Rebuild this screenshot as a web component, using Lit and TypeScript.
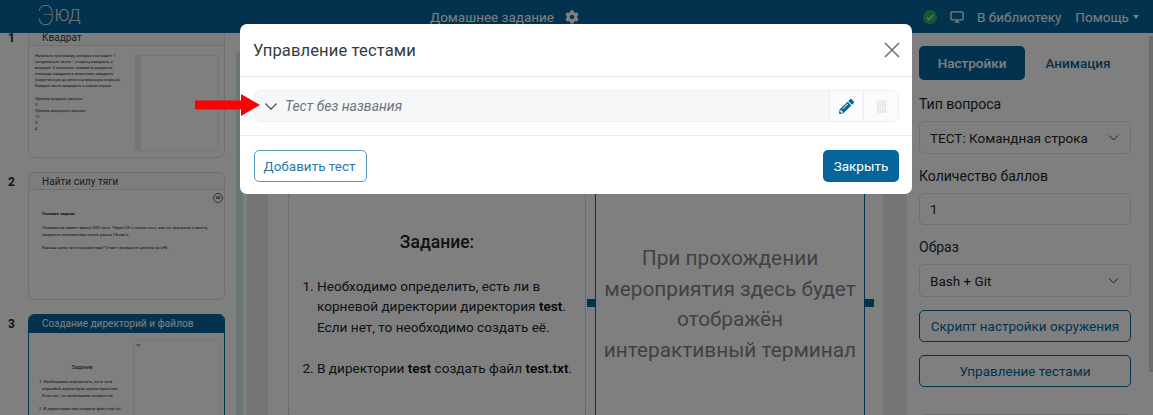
import { LitElement, html, css } from "lit";
import { customElement } from "lit/decorators.js";

const COG = "M487.4 315.7l-42.6-24.6c4.3-23.2 4.3-47 0-70.2l42.6-24.6c4.9-2.8 7.1-8.6 5.5-14-11.1-35.6-30-67.8-54.7-94.6-3.8-4.1-10-5.1-14.8-2.3L380.8 110c-17.9-15.4-38.5-27.3-60.8-35.1V25.8c0-5.6-3.9-10.5-9.4-11.7-36.7-8.2-74.3-7.8-109.2 0-5.5 1.2-9.4 6.1-9.4 11.7V75c-22.2 7.9-42.8 19.8-60.8 35.1L88.7 85.5c-4.9-2.8-11-1.9-14.8 2.3-24.7 26.7-43.6 58.9-54.7 94.6-1.7 5.4.6 11.2 5.5 14L67.3 221c-4.3 23.2-4.3 47 0 70.2l-42.6 24.6c-4.9 2.8-7.1 8.6-5.5 14 11.1 35.6 30 67.8 54.7 94.6 3.8 4.1 10 5.1 14.8 2.3l42.6-24.6c17.9 15.4 38.5 27.3 60.8 35.1v49.2c0 5.6 3.9 10.5 9.4 11.7 36.7 8.2 74.3 7.8 109.2 0 5.5-1.2 9.4-6.1 9.4-11.7v-49.2c22.2-7.9 42.8-19.8 60.8-35.1l42.6 24.6c4.9 2.8 11 1.9 14.8-2.3 24.7-26.7 43.6-58.9 54.7-94.6 1.5-5.5-.7-11.3-5.6-14.1zM256 336c-44.1 0-80-35.9-80-80s35.9-80 80-80 80 35.9 80 80-35.9 80-80 80z";
const PENCIL = "M497.9 142.1l-46.1 46.1c-4.7 4.7-12.3 4.7-17 0l-111-111c-4.7-4.7-4.7-12.3 0-17l46.1-46.1c18.7-18.7 49.1-18.7 67.9 0l60.1 60.1c18.8 18.7 18.8 49.1 0 67.9zM284.2 99.8L21.6 362.4.4 483.9c-2.9 16.4 11.4 30.6 27.8 27.8l121.5-21.3 262.6-262.6c4.7-4.7 4.7-12.3 0-17l-111-111c-4.8-4.7-12.4-4.7-17.1 0zM124.1 339.9c-5.5-5.5-5.5-14.3 0-19.8l154-154c5.5-5.5 14.3-5.5 19.8 0s5.5 14.3 0 19.8l-154 154c-5.5 5.5-14.3 5.5-19.8 0zM88 424h48v36.3l-64.5 11.3-31.1-31.1L51.7 376H88v48z";
const TRASH = "M32 464a48 48 0 0 0 48 48h288a48 48 0 0 0 48-48V128H32zm272-256a16 16 0 0 1 32 0v224a16 16 0 0 1-32 0zm-96 0a16 16 0 0 1 32 0v224a16 16 0 0 1-32 0zm-96 0a16 16 0 0 1 32 0v224a16 16 0 0 1-32 0zM432 32H312l-9-19a24 24 0 0 0-22-13H167a24 24 0 0 0-22 13l-9 19H16A16 16 0 0 0 0 48v32a16 16 0 0 0 16 16h416a16 16 0 0 0 16-16V48a16 16 0 0 0-16-16z";

const chevron = () => html`<svg class="chev" viewBox="0 0 16 16" fill="none" stroke="currentColor" stroke-width="1.4" stroke-linecap="round" stroke-linejoin="round"><path d="M2 5.5l6 6 6-6"/></svg>`;

@customElement("app-root")
export class AppRoot extends LitElement {
  static styles = css`
    :host { display: block; width: 1153px; height: 415px; font-family: Roboto, "Liberation Sans", sans-serif; color: #212529; }
    * { box-sizing: border-box; }
    .page { position: relative; width: 1153px; height: 415px; overflow: hidden; background: #fff; display: flex; flex-direction: column; }

    .top { flex: none; height: 33px; background: #06659c; color: #fff; display: flex; align-items: center; font-size: 13.5px; white-space: nowrap; z-index: 1; }
    .top > * { flex: none; }
    .logo { margin-left: 37px; width: 393px; display: flex; align-items: center; font-weight: 300; color: #f4f4f4; line-height: 1; }
    .logo .e { font-size: 27px; font-weight: 100; }
    .logo .r { font-size: 16.5px; letter-spacing: -.7px; }
    .cog { width: 14px; height: 14px; margin-left: 11px; fill: #fff; }
    .ok { width: 14px; height: 14px; margin-left: 344px; }
    .mon { width: 14px; height: 14px; margin-left: 13px; fill: none; stroke: #fff; stroke-width: 1.4; }
    .lib { margin-left: 13px; }
    .help { margin-left: 14px; }
    .caret { margin-left: 4px; width: 0; height: 0; border: 3.5px solid transparent; border-top: 4px solid #fff; border-bottom: 0; }

    .body { flex: 1; display: flex; min-height: 0; }

    .side { flex: none; width: 236px; overflow: hidden; display: flex; flex-direction: column; gap: 14px; margin-top: -5px; }
    .row { flex: none; display: flex; }
    .num { flex: none; width: 28px; padding: 3px 0 0 8px; font-size: 12px; font-weight: 700; line-height: 14px; color: #212529; }
    .card { flex: none; width: 197px; border: 1px solid #dee2e6; border-radius: 6px; overflow: hidden; background: #fff; color: #212529; }
    .card.one { height: 130px; }
    .card.two { height: 128px; }
    .card.three { height: 120px; border-color: #06659c; }
    .chead { height: 17px; padding-left: 13px; font-size: 10px; letter-spacing: .05px; line-height: 17px; color: #343a40; background: #fafafa; border-bottom: 1px solid #dee2e6; white-space: nowrap; }
    .three .chead { height: 18px; background: #06659c; color: #fff; border: 0; }
    .cbody { position: relative; display: flex; }
    .text { white-space: nowrap; }
    .one .text { flex: none; width: 103px; padding: 7px 0 0 6px; font-size: 4px; line-height: 6.1px; }
    .gap6 { height: 6px; }
    .pane { flex: none; border: 1px solid #efefef; }
    .one .pane { width: 84px; height: 96px; margin: 9px 0 0 3px; }
    .one .pane i { display: block; width: 5px; background: #ececec; height: 100%; }
    .two .text { padding: 20px 0 0 13px; font-size: 4.3px; line-height: 7px; }
    .two .text p { margin: 0 0 6.5px; }
    .badge { position: absolute; top: 3px; right: 1px; width: 10px; height: 10px; border: 1px solid #666; border-radius: 50%; font-size: 4px; line-height: 8px; text-align: center; font-weight: 700; }
    .three .text { flex: none; width: 105px; padding: 31px 0 0 10px; font-size: 4.2px; line-height: 7px; }
    .three .text h5 { margin: 0 0 7px; font-size: 5.2px; font-weight: 400; text-align: center; width: 87px; line-height: 7px; }
    .three .text .sp { margin-top: 6px; }
    .three .pane { width: 87px; height: 100px; margin: 7px 0 0 -1px; padding: 2px; font-size: 4.5px; line-height: 6px; }

    .sbar { flex: none; width: 7px; margin-top: 19px; background: #d8edf0; }
    .sgap { flex: none; width: 4px; }

    .main { flex: none; width: 659px; display: flex; background: #ebebeb; padding: 0 23px 0 21px; }
    .canvas { flex: 1; background: #fff; padding-left: 20px; display: flex; }
    .task { flex: none; width: 298px; border-left: 1px dotted #b8b8b8; border-right: 1px dotted #b8b8b8; padding: 197px 8px 0 14px; font-size: 13.6px; line-height: 20.4px; color: #212529; }
    .task h3 { margin: 0 0 22px; padding-right: 6px; text-align: center; font-size: 17.5px; font-weight: 500; line-height: 24px; }
    .task ol { margin: 0; padding: 0 0 0 14px; }
    .task li + li { margin-top: 20.4px; }
    .task b { font-weight: 500; color: #000; }
    .term { flex: none; position: relative; width: 270px; margin-left: 9px; border-left: 1px solid #06659c; border-right: 1px solid #06659c; padding-top: 210px; font-size: 20.8px; line-height: 30.6px; text-align: center; color: #7f8488; }
    .handle { position: absolute; top: 266px; width: 9px; height: 8px; background: #06659c; }
    .handle.l { left: -9px; }
    .handle.r { right: -10px; }

    .panel { flex: 1; border-left: 1px solid #f2f2f2; display: flex; }
    .form { flex: none; width: 226px; padding: 13px 0 0 12px; display: flex; flex-direction: column; }
    .form > * { flex: none; }
    .tabs { display: flex; align-items: center; height: 34px; font-size: 13.5px; font-weight: 500; }
    .tab { width: 106px; height: 34px; border-radius: 5px; background: #06659c; color: #fff; display: flex; align-items: center; justify-content: center; }
    .tab2 { width: 106px; color: #06659c; text-align: center; }
    label { display: block; font-size: 14px; line-height: 17px; margin-top: 14px; color: #212529; }
    .tabs + label { margin-top: 16px; }
    .ctl { margin-top: 8px; height: 33px; width: 212px; border: 1px solid #dee2e6; border-radius: 5px; display: flex; align-items: center; justify-content: space-between; padding: 0 11px 0 10px; font-size: 13.5px; color: #212529; }
    .ctl.short { height: 32px; }
    .ctl .chev { width: 11px; height: 11px; }
    .obtn { margin-top: 13px; height: 32px; width: 212px; border: 1px solid #06659c; border-radius: 5px; display: flex; align-items: center; justify-content: center; font-size: 13.5px; color: #06659c; white-space: nowrap; }
    .form .last { margin-top: 27px; height: 32px; width: 212px; border: 1px solid #dee2e6; border-radius: 5px; }
    .rbar { flex: none; width: 5px; height: 336px; margin: 3px 0 0 16px; background: #d8d8d8; }

    .backdrop { position: absolute; inset: 0; background: rgba(0,0,0,.5); z-index: 2; }
    .modal { position: absolute; left: 240px; top: 24px; width: 672px; height: 170px; background: #fff; border-radius: 7px; display: flex; flex-direction: column; color: #212529; }
    .mhead { height: 53px; flex: none; display: flex; align-items: center; justify-content: space-between; padding: 0 12px 0 13px; border-bottom: 1px solid #e9ecef; font-size: 16.6px; letter-spacing: .1px; color: #343a40; }
    .x { width: 16px; height: 16px; stroke: #6c757d; stroke-width: 1.6; fill: none; }
    .mbody { height: 59px; flex: none; padding: 13px 13px 0 14px; border-bottom: 1px solid #e9ecef; }
    .test { height: 32px; background: #f6f7f9; border: 1px solid #eceef1; border-radius: 7px; display: flex; align-items: center; }
    .test .chev { width: 14px; height: 14px; margin-left: 9px; color: #343a40; }
    .test em { margin-left: 7px; flex: 1; font-size: 14px; color: #6c757d; font-style: italic; }
    .cell { flex: none; width: 34px; height: 100%; border-left: 1px solid #eceef1; display: flex; align-items: center; justify-content: center; background: #fafbfc; }
    .cell + .cell { width: 35px; }
    .pen { width: 15px; height: 15px; fill: #06659c; }
    .bin { width: 11px; height: 13px; fill: #e6e8ea; }
    .mfoot { flex: 1; display: flex; align-items: flex-start; justify-content: space-between; padding: 14px 13px 0 14px; }
    .add { height: 32px; width: 113px; border: 1px solid #5a9cc0; border-radius: 5px; display: flex; align-items: center; justify-content: center; font-size: 13.5px; color: #2a7aa8; padding-right: 2px; }
    .close { height: 32px; width: 76px; background: #06659c; border-radius: 5px; display: flex; align-items: center; justify-content: center; font-size: 13.5px; color: #fff; }
    .arrow { position: absolute; left: 195px; top: 94px; width: 65px; height: 22px; fill: #f00; z-index: 3; }
  `;

  render() {
    return html`<div class="page">
      <div class="top">
        <div class="logo"><span class="e">Э</span><span class="r">ЮД</span></div>
        <span class="title">Домашнее задание</span>
        <svg class="cog" viewBox="0 0 512 512"><path d=${COG}/></svg>
        <svg class="ok" viewBox="0 0 14 14"><circle cx="7" cy="7" r="7" fill="#1fb56a"/><path d="M3.8 7.2l2.2 2.2 4.2-4.4" fill="none" stroke="#bdebd2" stroke-width="1.4"/></svg>
        <svg class="mon" viewBox="0 0 15 14"><rect x="1" y="1.5" width="13" height="8.5" rx="1"/><path d="M5 12.5h5M7.5 10v2.5"/></svg>
        <span class="lib">В библиотеку</span>
        <span class="help">Помощь</span>
        <span class="caret"></span>
      </div>
      <div class="body">
        <div class="side">
          <div class="row"><div class="num">1</div><div class="card one">
            <div class="chead">Квадрат</div>
            <div class="cbody">
              <div class="text">Написать программу, которая считывает 1<br>натуральное число − сторону квадрата, и<br>выводит 3 значения: периметр квадрата,<br>площадь квадрата и диагональ квадрата<br>(округленную до целого в меньшую сторону).<br>Каждое число выводить с новой строки<div class="gap6"></div>Пример входных данных:<br>3<br>Пример выходных данных:<br>12<br>9<br>4</div>
              <div class="pane"><i></i></div>
            </div>
          </div></div>
          <div class="row"><div class="num">2</div><div class="card two">
            <div class="chead">Найти силу тяги</div>
            <div class="cbody">
              <div class="badge">60</div>
              <div class="text"><p><b>Условие задачи:</b></p><p>Локомотив имеет массу 500 тонн. Через 25 с после того, как он тронулся с места,<br>скорость локомотива стала равна 18 км/ч.</p><p>Какова сила тяги локомотива? Ответ запишите числом (в кН).</p></div>
            </div>
          </div></div>
          <div class="row"><div class="num">3</div><div class="card three">
            <div class="chead">Создание директорий и файлов</div>
            <div class="cbody">
              <div class="text"><h5>Задание:</h5><div>1. Необходимо определить, есть ли в</div><div>&nbsp;&nbsp;&nbsp;корневой директории директория test.</div><div>&nbsp;&nbsp;&nbsp;Если нет, то необходимо создать её.</div><div class="sp">2. В директории test создать файл test.txt.</div></div>
              <div class="pane">&gt;&gt;</div>
            </div>
          </div></div>
        </div>
        <div class="sbar"></div>
        <div class="sgap"></div>
        <div class="main"><div class="canvas">
          <div class="task">
            <h3>Задание:</h3>
            <ol>
              <li>Необходимо определить, есть ли в корневой директории директория <b>test</b>. Если нет, то необходимо создать её.</li>
              <li>В директории <b>test</b> создать файл <b>test.txt</b>.</li>
            </ol>
          </div>
          <div class="term">
            <span class="handle l"></span><span class="handle r"></span>
            При прохождении<br>мероприятия здесь будет<br>отображён<br>интерактивный терминал
          </div>
        </div></div>
        <div class="panel">
          <div class="form">
            <div class="tabs"><div class="tab">Настройки</div><div class="tab2">Анимация</div></div>
            <label>Тип вопроса</label>
            <div class="ctl"><span>ТЕСТ: Командная строка</span>${chevron()}</div>
            <label>Количество баллов</label>
            <div class="ctl short"><span>1</span></div>
            <label>Образ</label>
            <div class="ctl"><span>Bash + Git</span>${chevron()}</div>
            <div class="obtn">Скрипт настройки окружения</div>
            <div class="obtn">Управление тестами</div>
            <div class="last"></div>
          </div>
          <div class="rbar"></div>
        </div>
      </div>

      <div class="backdrop">
        <div class="modal">
          <div class="mhead"><span>Управление тестами</span>
            <svg class="x" viewBox="0 0 16 16"><path d="M1 1l14 14M15 1L1 15"/></svg>
          </div>
          <div class="mbody">
            <div class="test">
              ${chevron()}
              <em>Тест без названия</em>
              <div class="cell"><svg class="pen" viewBox="0 0 512 512"><path d=${PENCIL}/></svg></div>
              <div class="cell"><svg class="bin" viewBox="0 0 448 512"><path d=${TRASH}/></svg></div>
            </div>
          </div>
          <div class="mfoot"><div class="add">Добавить тест</div><div class="close">Закрыть</div></div>
        </div>
      </div>
      <svg class="arrow" viewBox="0 0 65 22"><path d="M0 6.5h46V0l19 11-19 11v-6.5H0z"/></svg>
    </div>`;
  }
}
